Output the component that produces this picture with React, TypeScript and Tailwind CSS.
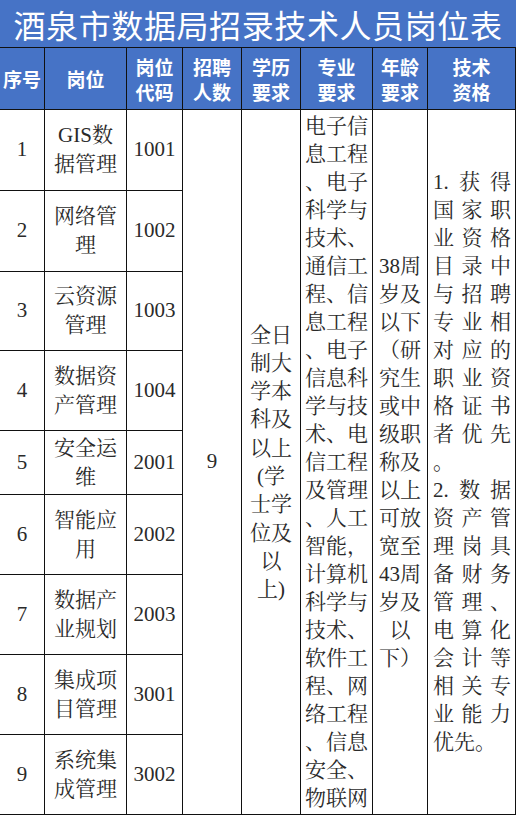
import type { FC } from "react";

// column widths: 序号 | 岗位 | 代码 | 人数 | 学历 | 专业 | 年龄 | 技术资格
const BODY_FONT = {
  fontFamily:
    '"Liberation Serif", "Noto Serif CJK SC", "Noto Sans CJK SC", serif',
};
const HEAD_FONT = {
  fontFamily: '"Noto Sans CJK SC", "Noto Sans", sans-serif',
};

const POSTS = [
  { n: 1, name: ["GIS数", "据管理"], code: "1001" },
  { n: 2, name: ["网络管", "理"], code: "1002" },
  { n: 3, name: ["云资源", "管理"], code: "1003" },
  { n: 4, name: ["数据资", "产管理"], code: "1004" },
  { n: 5, name: ["安全运", "维"], code: "2001" },
  { n: 6, name: ["智能应", "用"], code: "2002" },
  { n: 7, name: ["数据产", "业规划"], code: "2003" },
  { n: 8, name: ["集成项", "目管理"], code: "3001" },
  { n: 9, name: ["系统集", "成管理"], code: "3002" },
];

const EDUCATION = ["全日", "制大", "学本", "科及", "以上", "(学", "士学", "位及", "以", "上)"];

const MAJORS = [
  "电子信", "息工程", "、电子", "科学与", "技术、", "通信工", "程、信", "息工程",
  "、电子", "信息科", "学与技", "术、电", "信工程", "及管理", "、人工", "智能，",
  "计算机", "科学与", "技术、", "软件工", "程、网", "络工程", "、信息", "安全、", "物联网",
];

const AGE = [
  "38周", "岁及", "以下", "（研", "究生", "或中", "级职", "称及", "以上", "可放",
  "宽至", "43周", "岁及", "以", "下）",
];

const QUALIFICATION = [
  ["1.", "获", "得"], ["国", "家", "职"], ["业", "资", "格"], ["目", "录", "中"],
  ["与", "招", "聘"], ["专", "业", "相"], ["对", "应", "的"], ["职", "业", "资"],
  ["格", "证", "书"], ["者", "优", "先"], ["。"], ["2.", "数", "据"],
  ["资", "产", "管"], ["理", "岗", "具"], ["备", "财", "务"], ["管", "理", "、"],
  ["电", "算", "化"], ["会", "计", "等"], ["相", "关", "专"], ["业", "能", "力"],
  ["优先。"],
];

const HEADERS = [
  ["序号"], ["岗位"], ["岗位", "代码"], ["招聘", "人数"], ["学历", "要求"],
  ["专业", "要求"], ["年龄", "要求"], ["技术", "资格"],
];

const cell = "border-b border-r border-[#111]";

const HeaderCell: FC<{ lines: string[]; last: boolean }> = ({ lines, last }) => (
  <div
    className={`flex flex-col items-center justify-center border-b border-[#111] bg-[#4673c6] text-[19px] font-bold leading-[25px] text-white ${last ? "" : "border-r"}`}
    style={HEAD_FONT}
  >
    {lines.map((l) => (
      <span key={l}>{l}</span>
    ))}
  </div>
);

const Lines: FC<{ lines: string[]; lh: string }> = ({ lines, lh }) => (
  <>
    {lines.map((l, i) => (
      <div key={i} className={`whitespace-nowrap text-center ${lh}`}>
        {l}
      </div>
    ))}
  </>
);

export default function App() {
  return (
    <div
      className="grid w-[516px] grid-cols-[45px_82px_56px_59px_59px_72px_55px_88px] grid-rows-[48px_62px_81px_81px_79px_80px_64px_80px_80px_80px_80px] bg-white text-[21px] text-[#2a2a2a]"
      style={BODY_FONT}
    >
      <div
        className="col-span-8 flex items-center justify-center border-b border-[#111] bg-[#4673c6] text-[32px] leading-none tracking-[0.6px] text-white"
        style={HEAD_FONT}
      >
        酒泉市数据局招录技术人员岗位表
      </div>

      {HEADERS.map((h, i) => (
        <HeaderCell key={i} lines={h} last={false && i === 7} />
      ))}

      {POSTS.map((p, i) => (
        <div key={p.n} className="contents">
          <div
            className={`col-start-1 flex items-center justify-center border-b border-r border-[#111]`}
            style={{ gridRowStart: i + 3 }}
          >
            {p.n}
          </div>
          <div
            className={`col-start-2 flex flex-col items-center justify-center leading-[29px] ${cell}`}
            style={{ gridRowStart: i + 3 }}
          >
            {p.name.map((l) => (
              <span key={l}>{l}</span>
            ))}
          </div>
          <div
            className={`col-start-3 flex items-center justify-center ${cell}`}
            style={{ gridRowStart: i + 3 }}
          >
            {p.code}
          </div>
        </div>
      ))}

      <div className={`col-start-4 row-span-9 row-start-3 flex items-center justify-center ${cell}`}>
        9
      </div>
      <div className={`col-start-5 row-span-9 row-start-3 flex flex-col justify-center ${cell}`}>
        <Lines lines={EDUCATION} lh="leading-[28.3px]" />
      </div>
      <div className={`col-start-6 row-span-9 row-start-3 flex flex-col justify-center overflow-hidden ${cell}`}>
        <Lines lines={MAJORS} lh="leading-[28px]" />
      </div>
      <div className={`col-start-7 row-span-9 row-start-3 flex flex-col justify-center ${cell}`}>
        <Lines lines={AGE} lh="leading-[28px]" />
      </div>
      <div className={`col-start-8 row-span-9 row-start-3 flex flex-col justify-center pl-[5px] pr-[4px] ${cell}`}>
        {QUALIFICATION.map((parts, i) => (
          <div
            key={i}
            className={`flex whitespace-nowrap leading-[28px] ${parts.length > 1 ? "justify-between" : "justify-start"}`}
          >
            {parts.map((c, j) => (
              <span key={j}>{c}</span>
            ))}
          </div>
        ))}
      </div>
    </div>
  );
}
